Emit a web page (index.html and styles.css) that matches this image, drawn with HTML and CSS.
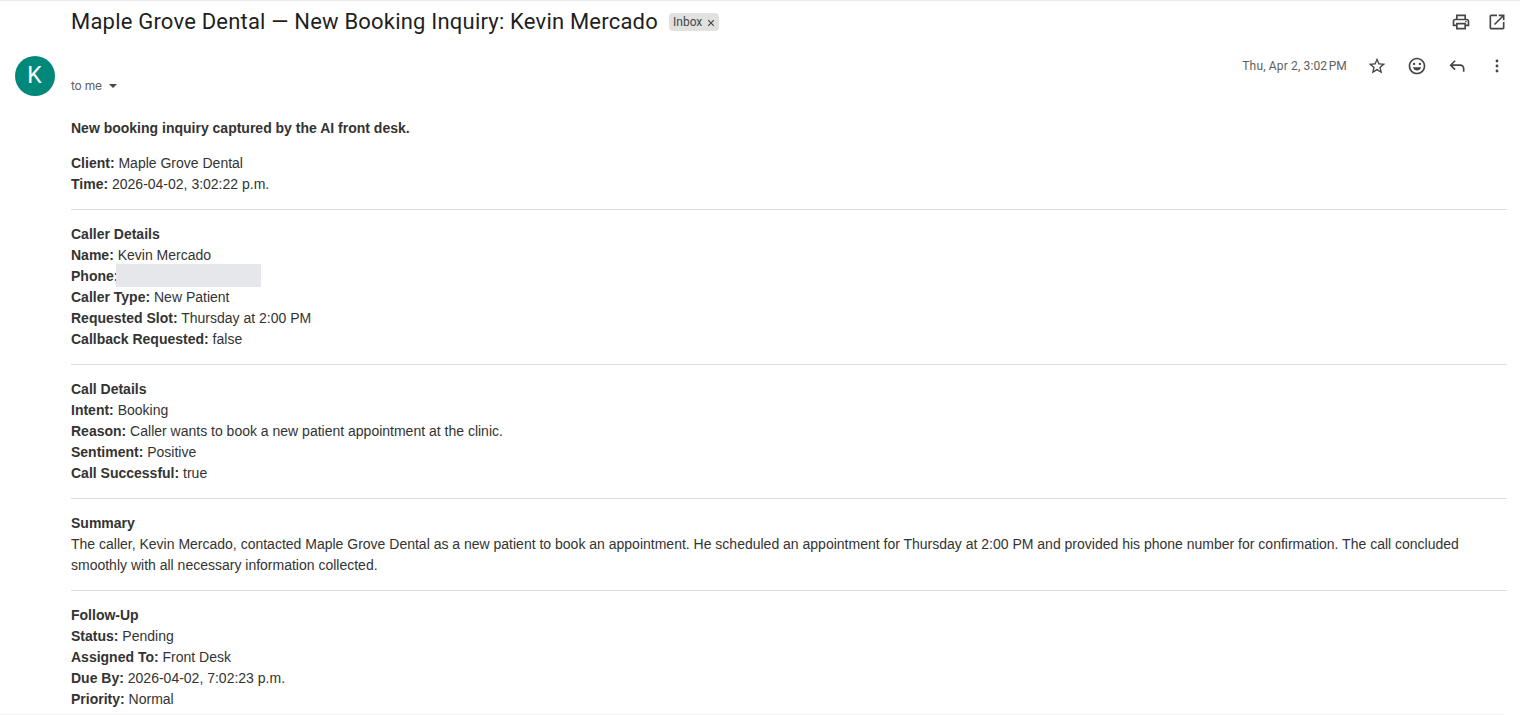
FILE: index.html
```html
<!DOCTYPE html>
<html lang="en">
<head>
  <meta charset="UTF-8">
  <title>Maple Grove Dental — New Booking Inquiry: Kevin Mercado</title>
  <link rel="stylesheet" href="styles.css">
</head>
<body>
  <main class="mail">
    <header class="subject-bar">
      <h1 class="subject">Maple Grove Dental — New Booking Inquiry: Kevin Mercado</h1>
      <span class="label">Inbox
        <svg viewBox="0 0 8 8"><path d="M1.2 1.2l5.6 5.6M6.8 1.2L1.2 6.8"/></svg>
      </span>
      <div class="subject-actions">
        <button aria-label="Print all">
          <svg viewBox="0 0 24 24"><path d="M19 8h-1V3H6v5H5c-1.66 0-3 1.34-3 3v6h4v4h12v-4h4v-6c0-1.66-1.34-3-3-3zM8 5h8v3H8V5zm8 14H8v-4h8v4zm2-4v-2H6v2H4v-4c0-.55.45-1 1-1h14c.55 0 1 .45 1 1v4h-2z"/><circle cx="18" cy="11.5" r="1"/></svg>
        </button>
        <button aria-label="In new window">
          <svg viewBox="0 0 24 24"><path d="M5 21c-1.1 0-2-.9-2-2V5c0-1.1.9-2 2-2h7v2H5v14h14v-7h2v7c0 1.1-.9 2-2 2H5zm4.7-5.3l-1.4-1.4L17.6 5H14V3h7v7h-2V6.4l-9.3 9.3z"/></svg>
        </button>
      </div>
    </header>

    <div class="sender-bar">
      <div class="avatar">K</div>
      <div class="recipient">to me <span class="caret"></span></div>
      <div class="meta">
        <span class="date">Thu, Apr 2, 3:02&#8202;PM</span>
        <button aria-label="Star">
          <svg viewBox="0 0 24 24"><path d="M22 9.24l-7.19-.62L12 2 9.19 8.63 2 9.24l5.46 4.73L5.82 21 12 17.27 18.18 21l-1.63-7.03L22 9.24zM12 15.4l-3.76 2.27 1-4.28-3.32-2.88 4.38-.38L12 6.1l1.71 4.04 4.38.38-3.32 2.88 1 4.28L12 15.4z"/></svg>
        </button>
        <button aria-label="Add reaction">
          <svg viewBox="0 0 24 24"><path d="M12 2C6.47 2 2 6.48 2 12s4.47 10 10 10 10-4.48 10-10S17.52 2 12 2zm0 18c-4.42 0-8-3.58-8-8s3.58-8 8-8 8 3.58 8 8-3.58 8-8 8z"/><circle cx="8.5" cy="9.5" r="1.4"/><circle cx="15.5" cy="9.5" r="1.4"/><path d="M7 13.5h10c-.8 2.3-2.7 4-5 4s-4.2-1.7-5-4z"/></svg>
        </button>
        <button aria-label="Reply">
          <svg viewBox="0 0 24 24"><path d="M19 19v-4c0-1.65-1.35-3-3-3H6.83l3.59 3.59L9 17l-6-6 6-6 1.41 1.41L6.83 10H16c2.76 0 5 2.24 5 5v4h-2z"/></svg>
        </button>
        <button aria-label="More">
          <svg viewBox="0 0 24 24"><circle cx="12" cy="6" r="1.7"/><circle cx="12" cy="12" r="1.7"/><circle cx="12" cy="18" r="1.7"/></svg>
        </button>
      </div>
    </div>

    <article class="message">
      <p><strong>New booking inquiry captured by the AI front desk.</strong></p>
      <p>
        <strong>Client:</strong> Maple Grove Dental<br>
        <strong>Time:</strong> 2026-04-02, 3:02:22 p.m.
      </p>
      <hr>
      <p>
        <strong>Caller Details</strong><br>
        <strong>Name:</strong> Kevin Mercado<br>
        <strong>Phone:</strong><span class="redacted"></span><br>
        <strong>Caller Type:</strong> New Patient<br>
        <strong>Requested Slot:</strong> Thursday at 2:00 PM<br>
        <strong>Callback Requested:</strong> false
      </p>
      <hr>
      <p>
        <strong>Call Details</strong><br>
        <strong>Intent:</strong> Booking<br>
        <strong>Reason:</strong> Caller wants to book a new patient appointment at the clinic.<br>
        <strong>Sentiment:</strong> Positive<br>
        <strong>Call Successful:</strong> true
      </p>
      <hr>
      <p>
        <strong>Summary</strong><br>
        The caller, Kevin Mercado, contacted Maple Grove Dental as a new patient to book an appointment. He scheduled an appointment for Thursday at 2:00 PM and provided his phone number for confirmation. The call concluded smoothly with all necessary information collected.
      </p>
      <hr>
      <p>
        <strong>Follow-Up</strong><br>
        <strong>Status:</strong> Pending<br>
        <strong>Assigned To:</strong> Front Desk<br>
        <strong>Due By:</strong> 2026-04-02, 7:02:23 p.m.<br>
        <strong>Priority:</strong> Normal
      </p>
    </article>
    <hr class="mail-end">
  </main>
</body>
</html>
```

FILE: styles.css
```css
* {
  box-sizing: border-box;
}

body {
  margin: 0;
  background: #fff;
  color: #333;
  font-family: "Liberation Sans", Arial, sans-serif;
}

.mail {
  display: flex;
  flex-direction: column;
  height: 715px;
  border-top: 1px solid #e9e9e9;
  overflow: hidden;
}

button {
  display: flex;
  padding: 0;
  border: 0;
  background: none;
}

button svg {
  width: 20px;
  height: 20px;
  fill: #444746;
}

.subject-bar {
  display: flex;
  flex: none;
  align-items: center;
  height: 42px;
  padding: 0 13px 0 71px;
}

.subject {
  width: 588px;
  margin: 0;
  color: #1f1f1f;
  font: 400 22px/28px Roboto, sans-serif;
  letter-spacing: 0.2px;
  white-space: nowrap;
}

.label {
  display: flex;
  align-items: center;
  gap: 5px;
  width: 50px;
  height: 18px;
  margin-left: 10px;
  padding: 0 4px;
  border-radius: 4px;
  background: #e1e1df;
  color: #444746;
  font: 12px/18px Roboto, sans-serif;
}

.label svg {
  flex: none;
  width: 8px;
  height: 8px;
  margin-top: 1px;
  stroke: #444746;
  stroke-width: 1.2;
}

.subject-actions {
  display: flex;
  gap: 16px;
  margin-left: auto;
}

.sender-bar {
  display: flex;
  flex: none;
  height: 61px;
  padding: 13px 13px 0 15px;
}

.avatar {
  width: 40px;
  height: 40px;
  padding-right: 1px;
  border-radius: 50%;
  background: #00897b;
  color: #fff;
  font: 400 23px/40px Roboto, sans-serif;
  text-align: center;
}

.recipient {
  display: flex;
  align-items: center;
  height: 20px;
  margin: 20px 0 0 16px;
  color: #5e5e5e;
  font: 12px/20px Inter, sans-serif;
  letter-spacing: -0.2px;
}

.caret {
  margin-left: 7px;
  border: 4px solid transparent;
  border-top-color: #444746;
  border-bottom: 0;
}

.meta {
  display: flex;
  align-items: center;
  gap: 20px;
  height: 20px;
  margin-left: auto;
}

.date {
  color: #5e5e5e;
  font: 12px/20px Roboto, sans-serif;
  letter-spacing: 0.15px;
}

.message {
  flex: none;
  margin: 0 13px 0 71px;
  font-size: 14px;
  line-height: 21px;
}

.message p {
  margin: 14px 0;
}

.message p:last-child {
  margin-bottom: 4px;
}

.message hr {
  margin: 14px 0;
  border: 0;
  border-top: 1px solid #ddd;
}

.redacted {
  display: inline-block;
  width: 145px;
  height: 23px;
  margin: -2px 0 0 -2px;
  background: #e5e7eb;
  vertical-align: top;
}

.mail-end {
  flex: none;
  width: 1504px;
  margin: 0;
  border: 0;
  border-top: 1px solid #f3f3f3;
}
```
